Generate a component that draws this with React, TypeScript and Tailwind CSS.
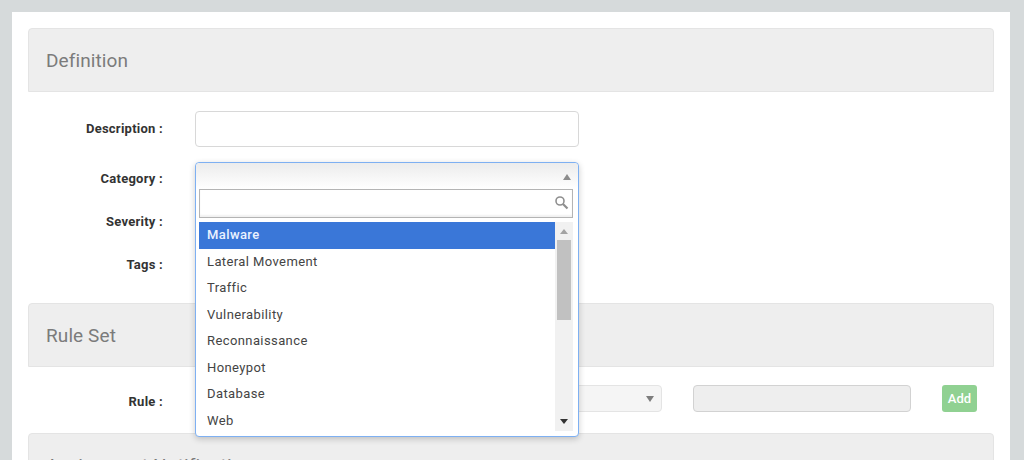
const options = ['Malware', 'Lateral Movement', 'Traffic', 'Vulnerability', 'Reconnaissance', 'Honeypot', 'Database', 'Web'];

function SectionHeader({ title }: { title: string }) {
  return (
    <div className="h-16 shrink-0 rounded-t-[4px] border border-[#e4e4e4] bg-[#eeeeee] pl-[17px] text-[19px] leading-[63px] tracking-[0.1px] text-[#7b7b7b]">
      {title}
    </div>
  );
}

function FieldLabel({ text }: { text: string }) {
  return <label className="w-[135px] shrink-0 text-right text-[13px] font-bold tracking-[0.25px] text-[#333333]">{text}</label>;
}

function CategoryDropdown() {
  return (
    <div className="absolute left-0 top-0 z-10 flex h-[275px] w-[384px] flex-col rounded-[4px] border border-[#7eb0f2] bg-white pl-[3px] pr-[5px] shadow-[0_2px_6px_rgba(0,0,0,0.2)]">
      <div className="relative -ml-[3px] -mr-[5px] h-[26px] shrink-0 rounded-t-[4px] bg-gradient-to-b from-[#ececec] to-white">
        <svg className="absolute right-[7px] top-[11px]" width="8" height="6" viewBox="0 0 8 6"><path d="M4 0L8 6H0z" fill="#8c8c8c" /></svg>
      </div>
      <div className="relative flex h-[29px] shrink-0 items-center border border-[#b4b4b4] bg-white shadow-[inset_0_-2px_2px_rgba(0,0,0,0.06)]">
        <svg className="absolute right-[3px] top-[5px]" width="15" height="15" viewBox="0 0 15 15" fill="none" stroke="#8f8f8f">
          <circle cx="6" cy="6" r="4" strokeWidth="1.6" />
          <path d="M9 9l4.5 4.5" strokeWidth="2.2" />
        </svg>
      </div>
      <div className="mt-[4px] flex min-h-0 flex-1">
        <ul className="w-[356px] shrink-0">
          {options.map((o, i) => (
            <li
              key={o}
              className={
                i === 0
                  ? 'h-[26.5px] bg-[#3a77d8] pl-2 text-[13px] font-medium leading-[26px] tracking-[0.4px] text-[#eaf2ff]'
                  : 'h-[26.5px] pl-2 text-[13px] leading-[26px] tracking-[0.4px] text-[#444444]'
              }
            >
              {o}
            </li>
          ))}
        </ul>
        <div className="flex h-[209px] w-[18px] shrink-0 flex-col items-center bg-[#f1f1f1]">
          <svg className="mt-[7px] shrink-0" width="8" height="5" viewBox="0 0 8 5"><path d="M4 0L8 5H0z" fill="#a3a3a3" /></svg>
          <div className="mt-[6px] h-[80px] w-[14px] shrink-0 bg-[#c1c1c1]" />
          <svg className="mt-auto mb-[7px] shrink-0" width="8" height="5" viewBox="0 0 8 5"><path d="M4 5L8 0H0z" fill="#333333" /></svg>
        </div>
      </div>
    </div>
  );
}

export default function App() {
  return (
    <div className="h-[460px] overflow-hidden bg-[#d6dadb] pl-3 pr-[14px] pt-3 font-['Roboto',sans-serif]">
      <div className="flex h-[448px] flex-col bg-white px-4 pt-4">
        <SectionHeader title="Definition" />
        <div className="flex h-[211px] shrink-0 flex-col pt-[19px]">
          <div className="flex h-9 items-center gap-8">
            <FieldLabel text="Description :" />
            <input className="h-9 w-[384px] rounded-[4px] border border-[#d8d8d8] bg-white" />
          </div>
          <div className="mt-[15px] flex h-[34px] items-center gap-8">
            <FieldLabel text="Category :" />
            <div className="relative h-[34px] w-[384px]">
              <CategoryDropdown />
            </div>
          </div>
          <div className="mt-[9px] flex h-[34px] items-center gap-8">
            <FieldLabel text="Severity :" />
          </div>
          <div className="mt-[9px] flex h-[34px] items-center gap-8">
            <FieldLabel text="Tags :" />
          </div>
        </div>
        <SectionHeader title="Rule Set" />
        <div className="flex h-[66px] shrink-0 items-start pt-[18px]">
          <div className="flex items-start gap-8">
            <div className="flex pt-[7px]">
              <FieldLabel text="Rule :" />
            </div>
            <div className="flex h-[27px] w-[467px] items-center justify-end rounded-[4px] border border-[#e4e4e4] bg-[#f5f5f5] pr-[7px]">
              <svg width="8" height="6" viewBox="0 0 8 6"><path d="M4 6L8 0H0z" fill="#7d7d7d" /></svg>
            </div>
          </div>
          <input disabled className="ml-[31px] h-[27px] w-[218px] rounded-[4px] border border-[#d2d2d2] bg-[#eeeeee]" />
          <button className="ml-[31px] h-[27px] w-[35px] rounded-[3px] bg-[#90d192] text-[13px] font-medium text-white">Add</button>
        </div>
        <SectionHeader title="Assignment Notification" />
      </div>
    </div>
  );
}
